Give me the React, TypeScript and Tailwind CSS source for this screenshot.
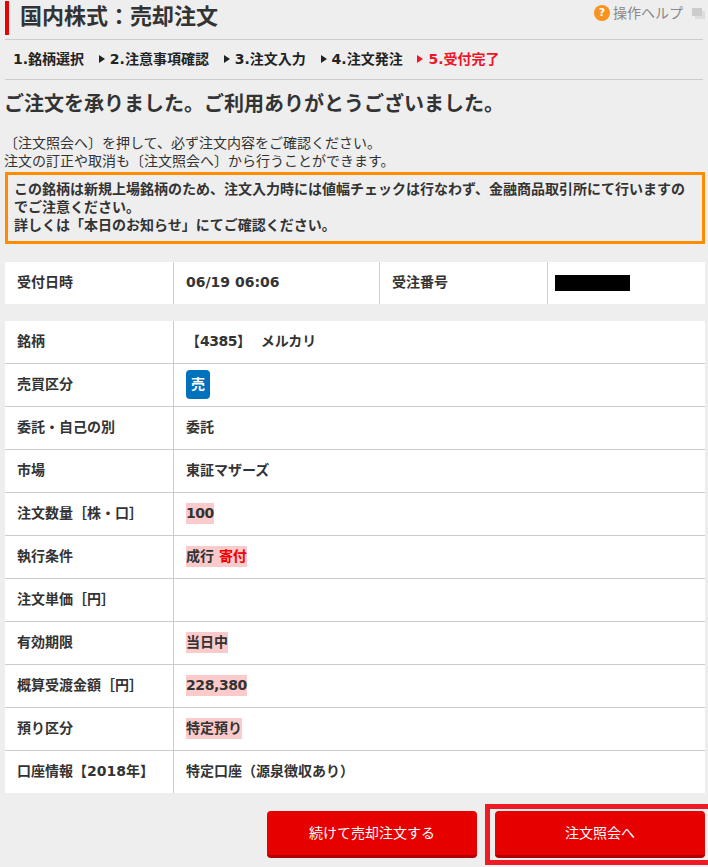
const fontStack = "font-['DejaVu_Sans','Noto_Sans_CJK_JP',sans-serif]";

function Arrow({ red }: { red?: boolean }) {
  return (
    <svg width="6" height="8" viewBox="0 0 6 8" className="mr-[5px] mt-[1px] shrink-0">
      <path d="M0 0L6 4L0 8Z" fill={red ? "#f01428" : "#222"} />
    </svg>
  );
}

function Step({ label, active, first }: { label: string; active?: boolean; first?: boolean }) {
  return (
    <div className={`flex items-center ${active ? "text-[#f01428]" : "text-[#222]"}`}>
      {!first && <Arrow red={active} />}
      <span>{label}</span>
    </div>
  );
}

function Mark({ children }: { children: React.ReactNode }) {
  return <span className="inline-block bg-[#fbcaca] leading-[21px]">{children}</span>;
}

const rows: { label: string; value: React.ReactNode }[] = [
  {
    label: "銘柄",
    value: (
      <span>
        【<span className="tracking-[-0.5px]">4385</span>】&nbsp;&nbsp;メルカリ
      </span>
    ),
  },
  {
    label: "売買区分",
    value: (
      <span className="flex h-[29px] w-6 items-center justify-center rounded-[4px] bg-[#0071bc] text-white">売</span>
    ),
  },
  { label: "委託・自己の別", value: "委託" },
  { label: "市場", value: "東証マザーズ" },
  { label: "注文数量［株・口］", value: <Mark><span className="tracking-[-0.5px]">100</span></Mark> },
  {
    label: "執行条件",
    value: (
      <Mark>
        成行 <span className="text-[#f00000]">寄付</span>
      </Mark>
    ),
  },
  { label: "注文単価［円］", value: "" },
  { label: "有効期限", value: <Mark>当日中</Mark> },
  { label: "概算受渡金額［円］", value: <Mark><span className="tracking-[-0.4px]">228,380</span></Mark> },
  { label: "預り区分", value: <Mark>特定預り</Mark> },
  { label: "口座情報【2018年】", value: "特定口座（源泉徴収あり）" },
];

export default function App() {
  return (
    <div className={`${fontStack} h-[867px] w-[708px] overflow-hidden bg-[#eeeeee] text-[14px] text-[#333]`}>
      {/* title */}
      <div className="mr-[3px] ml-[5px] flex h-[39px] items-start pt-px">
        <div className="flex h-[34px] flex-1 items-center border-l-4 border-[#e60000] pb-[2px] pl-[11px]">
          <h1 className="text-[22px] leading-none font-bold text-[#333]">国内株式：売却注文</h1>
        </div>
        <div className="mt-[3px] flex items-center text-[#888]">
          <span className="flex h-4 w-4 items-center justify-center rounded-full bg-[#f7931e] text-[11px] font-bold text-white">?</span>
          <span className="ml-[3px] leading-[18px]">操作ヘルプ</span>
          <svg width="13" height="12" viewBox="0 0 13 12" className="mt-px ml-[9px]">
            <rect x="3" y="3" width="10" height="8" fill="#ddd" />
            <rect x="0" y="0" width="10" height="8" fill="#ccc" />
          </svg>
        </div>
      </div>

      {/* steps */}
      <div className="mx-[5px] flex h-[41px] items-center gap-[14.8px] border-y border-[#cccccc] pb-[2px] pl-2 leading-none font-bold">
        <Step label="1.銘柄選択" first />
        <Step label="2.注意事項確認" />
        <Step label="3.注文入力" />
        <Step label="4.注文発注" />
        <Step label="5.受付完了" active />
      </div>

      <h2 className="mt-[9px] ml-1 text-[20px] leading-[30px] font-bold">ご注文を承りました。ご利用ありがとうございました。</h2>

      <p className="mt-[15px] ml-1 leading-[18px]">
        <span className="block">〔注文照会へ〕を押して、必ず注文内容をご確認ください。</span>
        <span className="block">注文の訂正や取消も〔注文照会へ〕から行うことができます。</span>
      </p>

      {/* notice */}
      <div className="mx-[5px] mt-[2px] h-[72px] w-[700px] border-[3px] border-[#ff8c00] px-[6px] pt-[5px] leading-[18px] font-bold">
        この銘柄は新規上場銘柄のため、注文入力時には値幅チェックは行なわず、金融商品取引所にて行いますのでご注意ください。
        <br />
        詳しくは「本日のお知らせ」にてご確認ください。
      </div>

      {/* receipt */}
      <div className="mt-[18px] ml-[5px] flex h-[42px] w-[700px] items-center bg-white font-bold">
        <div className="flex h-full w-[169px] items-center border-r border-[#cccccc] pb-[2px] pl-3">受付日時</div>
        <div className="flex h-full w-[206px] items-center border-r border-[#cccccc] pb-[2px] pl-3">06/19 06:06</div>
        <div className="flex h-full w-[168px] items-center border-r border-[#cccccc] pb-[2px] pl-3">受注番号</div>
        <div className="flex h-full flex-1 items-center pl-[7px]">
          <div className="h-4 w-[75px] bg-black" />
        </div>
      </div>

      {/* details */}
      <div className="mt-[17px] ml-[5px] w-[700px] bg-white font-bold">
        {rows.map((row, i) => (
          <div key={row.label} className={`flex ${i > 0 ? "h-[43px] border-t border-[#cccccc]" : "h-[42px]"}`}>
            <div className="flex w-[169px] items-center border-r border-[#cccccc] pb-[2px] pl-3">{row.label}</div>
            <div className="flex flex-1 items-center pb-[2px] pl-3">{row.value}</div>
          </div>
        ))}
      </div>

      {/* buttons */}
      <div className="mt-[11px] flex h-[61px] items-center pl-[267px]">
        <button className="h-[47px] w-[210px] shrink-0 rounded-[4px] border-b-[3px] border-[#b30000] bg-[#e60000] text-white">続けて売却注文する</button>
        <div className="ml-2 flex h-[61px] w-[230px] shrink-0 items-center justify-center border-[5px] border-[#ed1c24]">
          <button className="h-[47px] w-[210px] shrink-0 rounded-[4px] border-b-[3px] border-[#b30000] bg-[#e60000] text-white">注文照会へ</button>
        </div>
      </div>
    </div>
  );
}
